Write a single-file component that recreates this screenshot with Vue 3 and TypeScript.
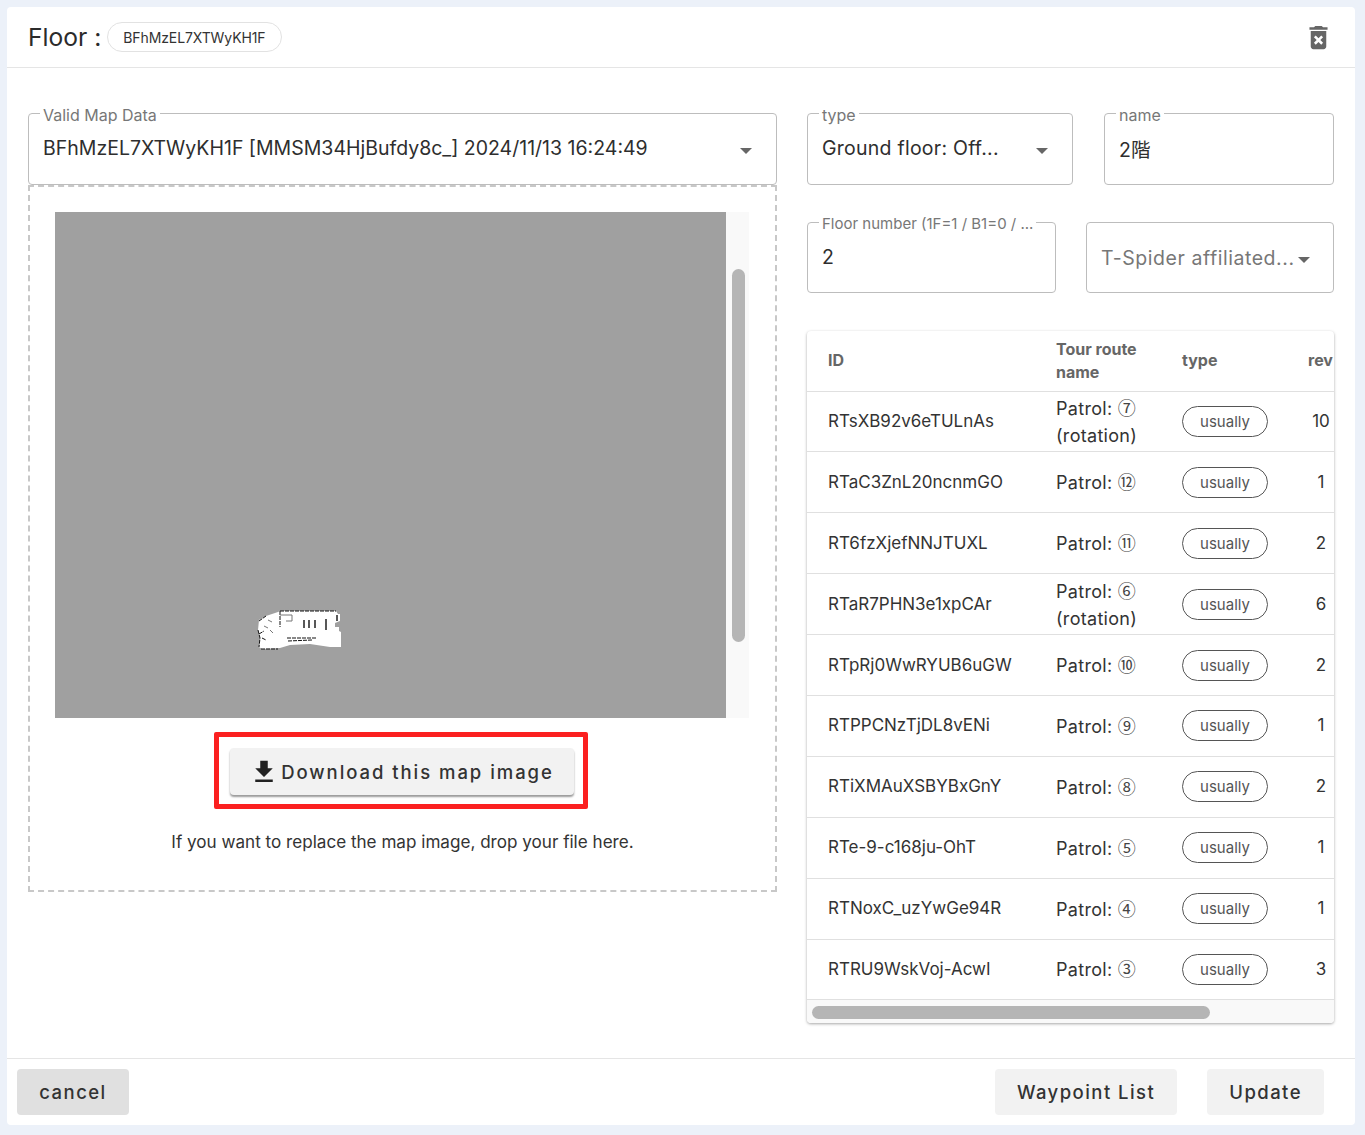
<script setup lang="ts">
interface Route {
  id: string;
  num: string;
  rev: number;
  rotation?: boolean;
}

const routes: Route[] = [
  { id: 'RTsXB92v6eTULnAs', num: '⑦', rev: 10, rotation: true },
  { id: 'RTaC3ZnL20ncnmGO', num: '⑫', rev: 1 },
  { id: 'RT6fzXjefNNJTUXL', num: '⑪', rev: 2 },
  { id: 'RTaR7PHN3e1xpCAr', num: '⑥', rev: 6, rotation: true },
  { id: 'RTpRj0WwRYUB6uGW', num: '⑩', rev: 2 },
  { id: 'RTPPCNzTjDL8vENi', num: '⑨', rev: 1 },
  { id: 'RTiXMAuXSBYBxGnY', num: '⑧', rev: 2 },
  { id: 'RTe-9-c168ju-OhT', num: '⑤', rev: 1 },
  { id: 'RTNoxC_uzYwGe94R', num: '④', rev: 1 },
  { id: 'RTRU9WskVoj-AcwI', num: '③', rev: 3 },
];
</script>

<template>
  <div class="page">
    <div class="card">
      <header class="head">
        <span class="title">Floor :</span>
        <span class="chip">BFhMzEL7XTWyKH1F</span>
        <svg class="trash" viewBox="0 0 24 24">
          <path d="M6 19c0 1.1.9 2 2 2h8c1.1 0 2-.9 2-2V7H6v12zm2.46-7.12 1.41-1.41L12 12.59l2.12-2.12 1.41 1.41L13.41 14l2.12 2.12-1.41 1.41L12 15.41l-2.12 2.12-1.41-1.41L10.59 14l-2.13-2.12zM15.5 4l-1-1h-5l-1 1H5v2h14V4z" />
        </svg>
      </header>

      <main class="body">
        <section class="left">
          <fieldset class="field">
            <legend>Valid Map Data</legend>
            <span class="value">BFhMzEL7XTWyKH1F [MMSM34HjBufdy8c_] 2024/11/13 16:24:49</span>
            <i class="caret"></i>
          </fieldset>

          <div class="drop">
            <div class="map-wrap">
              <svg class="map" viewBox="0 0 671 506">
                <rect width="671" height="506" fill="#a0a0a0" />
                <g transform="translate(195 388)">
                  <path d="M9 20 16 16 28 12 30 11 86 11 88 14 90 14 90 21 85 23 85 27 89 27 89 31 91 32 91 47 80 47 60 44 40 45 30 48 12 49 9 47 10 38 8 30Z" fill="#fff" />
                  <path d="M30 11H86M30 11V27M9 21 16 16M8 30 10 38 9 47M9 34 14 31M11 49H28M12 38 16 40M37 38H66M38 41 62 40" fill="none" stroke="#111" stroke-width="1" stroke-dasharray="4 1" />
                  <path d="M54 20V28M59 20V28M65 20V28M76 19V30M87 15V21" fill="none" stroke="#222" stroke-width="1.5" />
                  <path d="M30 15H42V21H36M18 20 22 22M14 26 18 28M20 30 23 33" fill="none" stroke="#777" stroke-width="1" />
                </g>
              </svg>
              <div class="map-scroll"><div class="map-thumb"></div></div>
            </div>

            <div class="highlight">
              <button class="download">
                <svg viewBox="0 0 24 24"><path d="M5 20h14v-2H5v2zM19 9h-4V3H9v6H5l7 7 7-7z" /></svg>
                Download this map image
              </button>
            </div>
            <p class="hint">If you want to replace the map image, drop your file here.</p>
          </div>
        </section>

        <section class="right">
          <div class="row">
            <fieldset class="field type-field">
              <legend>type</legend>
              <span class="value clip">Ground floor: Off...</span>
              <i class="caret"></i>
            </fieldset>
            <fieldset class="field name-field">
              <legend>name</legend>
              <span class="value">2階</span>
            </fieldset>
          </div>

          <div class="row second">
            <fieldset class="field number-field">
              <legend>Floor number (1F=1 / B1=0 / ...</legend>
              <span class="value">2</span>
            </fieldset>
            <fieldset class="field spider-field">
              <span class="value muted">T-Spider affiliated...</span>
              <i class="caret near"></i>
            </fieldset>
          </div>

          <div class="table-card">
            <div class="table-clip">
              <table>
                <colgroup>
                  <col class="c-id" />
                  <col class="c-name" />
                  <col class="c-type" />
                  <col class="c-rev" />
                </colgroup>
                <thead>
                  <tr>
                    <th>ID</th>
                    <th>Tour route name</th>
                    <th>type</th>
                    <th>rev</th>
                  </tr>
                </thead>
                <tbody>
                  <tr v-for="r in routes" :key="r.id">
                    <td>{{ r.id }}</td>
                    <td class="route">Patrol: <span class="num">{{ r.num }}</span><template v-if="r.rotation"><br />(rotation)</template></td>
                    <td><span class="pill">usually</span></td>
                    <td class="rev">{{ r.rev }}</td>
                  </tr>
                </tbody>
              </table>
            </div>
            <div class="table-scroll"><div class="table-thumb"></div></div>
          </div>
        </section>
      </main>

      <footer class="foot">
        <button class="btn cancel">cancel</button>
        <span class="spacer"></span>
        <button class="btn">Waypoint List</button>
        <button class="btn">Update</button>
      </footer>
    </div>
  </div>
</template>

<style>
html,
body {
  background: #ecf1f9;
}
</style>

<style scoped>
.page {
  box-sizing: border-box;
  height: 1135px;
  padding: 7px 10px 10px 7px;
  font-family: Inter, "Noto Sans CJK JP", sans-serif;
  color: #333;
}
.card {
  display: flex;
  flex-direction: column;
  height: 100%;
  background: #fff;
  border-radius: 4px;
}

/* header */
.head {
  display: flex;
  align-items: center;
  height: 60px;
  padding: 0 20px 0 21px;
  border-bottom: 1px solid #e5e5e5;
  box-sizing: content-box;
}
.title {
  font-size: 24.6px;
  color: #2b2b2b;
}
.chip {
  margin-left: 6px;
  height: 30px;
  padding: 0 15px;
  display: flex;
  align-items: center;
  border: 1px solid #e2e2e2;
  border-radius: 16px;
  font-size: 14px;
  letter-spacing: -0.1px;
  box-sizing: border-box;
}
.trash {
  width: 31px;
  height: 31px;
  margin-left: auto;
  margin-right: 1px;
  fill: #666;
}

/* body */
.body {
  flex: 1;
  display: flex;
  gap: 30px;
  padding: 36px 21px 0;
}
.left {
  width: 749px;
}
.right {
  width: 527px;
}
.row {
  display: flex;
  justify-content: space-between;
}
.second {
  margin-top: 28px;
}

/* fields */
.field {
  position: relative;
  box-sizing: border-box;
  margin: 0;
  min-width: 0;
  height: 81px;
  padding: 0 14px;
  display: flex;
  align-items: center;
  border: 1px solid #bdbdbd;
  border-radius: 4px;
}
.field legend {
  padding: 4px 3px 0;
  margin-left: -3px;
  font-size: 16px;
  line-height: 14px;
  color: #777;
  white-space: nowrap;
}
.value {
  font-size: 19.5px;
  color: #2e2e2e;
  white-space: nowrap;
  margin-top: -10px;
}
.clip {
  letter-spacing: 0.25px;
}
.muted {
  color: #777;
  letter-spacing: 0.55px;
}
.caret {
  position: absolute;
  right: 24px;
  top: 26px;
  width: 0;
  height: 0;
  border-left: 6px solid transparent;
  border-right: 6px solid transparent;
  border-top: 6px solid #666;
}
.near {
  right: 23px;
}
.type-field {
  width: 266px;
}
.name-field {
  width: 230px;
}
.number-field {
  width: 249px;
  height: 80px;
}
.spider-field {
  width: 248px;
  height: 71px;
  margin-top: 9px;
}
.spider-field .value {
  margin-top: 0;
}
.spider-field .caret {
  top: 34px;
}
.number-field legend {
  font-size: 15px;
}

/* drop area */
.drop {
  height: 707px;
  box-sizing: border-box;
  border: 2px dashed #c8c8c8;
  padding: 25px 25px 0;
  display: flex;
  flex-direction: column;
  align-items: center;
}
.map-wrap {
  display: flex;
  width: 694px;
  height: 506px;
  flex-shrink: 0;
  align-self: flex-start;
}
.map {
  display: block;
  width: 671px;
  height: 506px;
}
.map-scroll {
  width: 23px;
  background: #f9f9f9;
  padding: 57px 4px 0 6px;
  box-sizing: border-box;
}
.map-thumb {
  height: 373px;
  background: #b5b5b5;
  border-radius: 7px;
}
.highlight {
  margin-top: 14px;
  border: 5px solid #fb2020;
  border-radius: 2px;
  padding: 11px 9px 9px 11px;
  margin-right: 4px;
}
.download {
  display: flex;
  align-items: center;
  justify-content: center;
  width: 344px;
  height: 47px;
  border: 0;
  border-radius: 4px;
  background: #f2f2f2;
  box-shadow: 0 2px 2px rgba(0, 0, 0, 0.4);
  font: inherit;
  font-size: 18.5px;
  font-weight: 500;
  letter-spacing: 1.95px;
  color: #333;
}
.download svg {
  width: 30px;
  height: 30px;
  fill: #222;
  margin-right: 2px;
}
.hint {
  margin: 22px 0 0;
  font-size: 17.1px;
  color: #333;
}

/* table */
.table-card {
  margin-top: 38px;
  border-radius: 4px;
  box-shadow: 0 1px 3px rgba(0, 0, 0, 0.35);
  overflow: hidden;
}
.table-clip {
  overflow: hidden;
}
table {
  border-collapse: collapse;
  table-layout: fixed;
  width: 559px;
}
.c-id {
  width: 228px;
}
.c-name {
  width: 126px;
}
.c-type {
  width: 126px;
}
.c-rev {
  width: 79px;
}
th {
  height: 60px;
  box-sizing: border-box;
  padding: 0 0 0 21px;
  text-align: left;
  font-size: 16px;
  line-height: 23px;
  font-weight: 700;
  color: #666;
  border-bottom: 1px solid #e0e0e0;
}
th:nth-child(2) {
  padding-right: 10px;
}
td {
  height: 60.9px;
  box-sizing: border-box;
  padding: 0 0 0 21px;
  font-size: 17px;
  line-height: 27px;
  color: #333;
  border-bottom: 1px solid #e0e0e0;
  white-space: nowrap;
}
.route {
  font-size: 18px;
  letter-spacing: 0.3px;
}
.num {
  font-family: "Noto Sans CJK JP", sans-serif;
  font-size: 18px;
  letter-spacing: 0;
  color: #444;
}
.rev {
  padding-left: 21px;
  padding-right: 32px;
  text-align: center;
}
.pill {
  display: inline-flex;
  align-items: center;
  justify-content: center;
  width: 86px;
  height: 31px;
  box-sizing: border-box;
  border: 1px solid #555;
  border-radius: 16px;
  font-size: 15px;
  color: #555;
}
.table-scroll {
  height: 23px;
  background: #f9f9f9;
  padding: 6px 5px;
  box-sizing: border-box;
}
.table-thumb {
  width: 398px;
  height: 13px;
  background: #b5b5b5;
  border-radius: 7px;
}

/* footer */
.foot {
  display: flex;
  align-items: center;
  gap: 30px;
  height: 66px;
  padding: 0 31px 0 10px;
  border-top: 1px solid #e5e5e5;
}
.spacer {
  flex: 1;
}
.btn {
  height: 46px;
  padding: 0 22px;
  border: 0;
  border-radius: 4px;
  background: #f2f2f2;
  font: inherit;
  font-size: 18.5px;
  font-weight: 500;
  letter-spacing: 1.45px;
  color: #333;
}
.cancel {
  width: 112px;
  background: #e0e0e0;
}
</style>
